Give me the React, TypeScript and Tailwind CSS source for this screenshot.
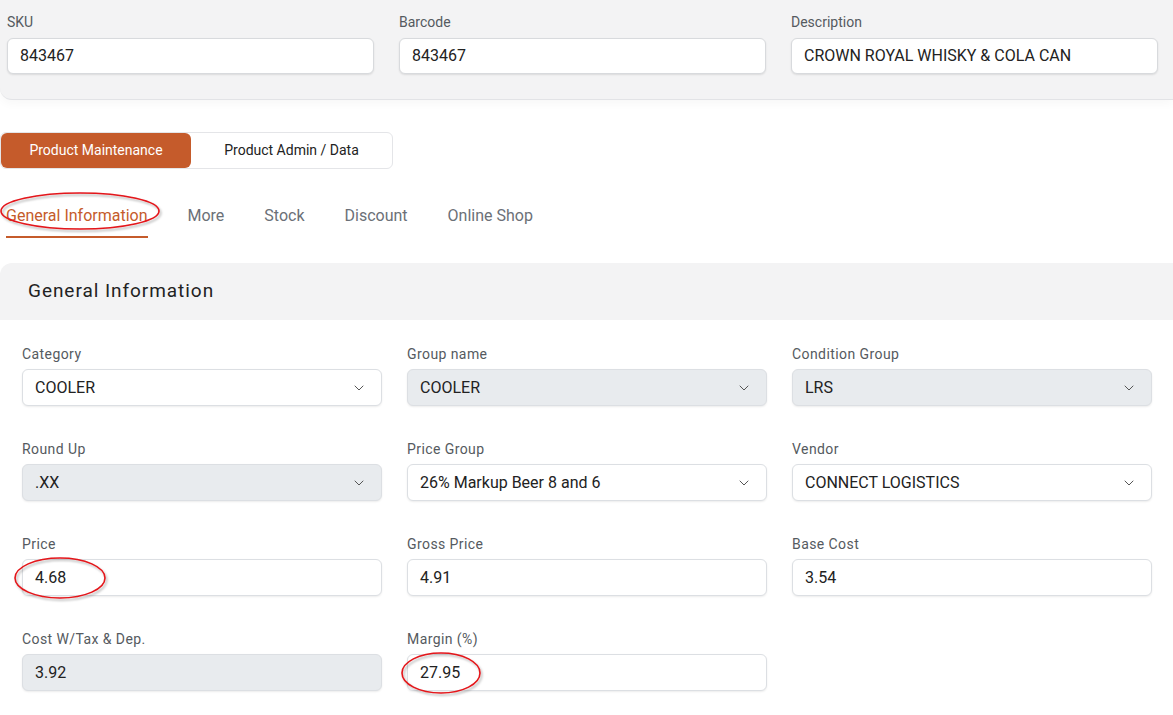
import { ChevronDown } from "lucide-react";

// --- small building blocks ---------------------------------------------------

function Field({ label, value, select, disabled }: { label: string; value: string; select?: boolean; disabled?: boolean }) {
  return (
    <div className="flex flex-col">
      <label className="text-[14px] leading-5 tracking-[0.03em] text-[#555a60] mb-[5px]">{label}</label>
      <div
        className={`h-[37px] flex items-center justify-between rounded-md border border-[#dcdfe3] shadow-[0_1px_2px_rgba(0,0,0,0.08)] pl-[12px] pr-[14px] ${
          disabled ? "bg-[#e8ebee]" : "bg-white"
        }`}
      >
        <span className="text-[16px] text-[#222]">{value}</span>
        {select && <ChevronDown size={16} strokeWidth={1.5} className="text-[#555]" />}
      </div>
    </div>
  );
}

function TopField({ label, value }: { label: string; value: string }) {
  return (
    <div className="flex flex-col">
      <label className="text-[14px] leading-5 text-[#555a60] mb-[6px]">{label}</label>
      <div className="h-[36px] flex items-center rounded-md border border-[#d8dadd] bg-white shadow-[0_1px_2px_rgba(0,0,0,0.1)] px-[12px]">
        <span className="text-[16px] text-[#222]">{value}</span>
      </div>
    </div>
  );
}

const tabs = ["General Information", "More", "Stock", "Discount", "Online Shop"];

export default function App() {
  return (
    <div className="relative min-h-screen bg-white font-['Roboto',sans-serif] overflow-hidden">
      {/* Header card */}
      <div className="bg-[#f3f3f4] border-b border-[#e2e3e6] rounded-bl-xl pt-[12px] pb-[25px] pl-[7px] pr-[15px] shadow-[0_4px_10px_rgba(0,0,0,0.03)]">
        <div className="grid grid-cols-3 gap-[25px]">
          <TopField label="SKU" value="843467" />
          <TopField label="Barcode" value="843467" />
          <TopField label="Description" value="CROWN ROYAL WHISKY & COLA CAN" />
        </div>
      </div>

      {/* Segmented control */}
      <div className="mt-[32px] flex w-[393px] h-[37px] rounded-md border border-[#e4e5e8] bg-white">
        <button className="w-[190px] rounded-md bg-[#c55b2b] text-white text-[14px]">Product Maintenance</button>
        <button className="flex-1 text-[14px] text-[#222]">Product Admin / Data</button>
      </div>

      {/* Tabs */}
      <div className="mt-[37px] flex gap-10 pl-[6px]">
        {tabs.map((t, i) => (
          <div
            key={t}
            className={`pb-[10px] text-[16px] leading-5 border-b-2 ${
              i === 0 ? "text-[#c55b2b] border-[#c55b2b]" : "text-[#6b7077] border-transparent"
            }`}
          >
            {t}
          </div>
        ))}
      </div>

      {/* Section */}
      <div className="mt-[25px]">
        <div className="h-[57px] bg-[#f3f3f4] rounded-tl-xl flex items-center pl-[28px]">
          <h2 className="text-[19px] tracking-[0.05em] text-[#222]">General Information</h2>
        </div>
        <div className="pl-[22px] pr-[21px] pt-[24px] grid grid-cols-3 gap-x-[25px] gap-y-[33px]">
          <Field label="Category" value="COOLER" select />
          <Field label="Group name" value="COOLER" select disabled />
          <Field label="Condition Group" value="LRS" select disabled />
          <Field label="Round Up" value=".XX" select disabled />
          <Field label="Price Group" value="26% Markup Beer 8 and 6" select />
          <Field label="Vendor" value="CONNECT LOGISTICS" select />
          <Field label="Price" value="4.68" />
          <Field label="Gross Price" value="4.91" />
          <Field label="Base Cost" value="3.54" />
          <Field label="Cost W/Tax & Dep." value="3.92" disabled />
          <Field label="Margin (%)" value="27.95" />
        </div>
      </div>

      {/* Red annotation marks drawn over the screenshot */}
      <svg className="absolute inset-0 pointer-events-none" width="1173" height="715">
        <defs>
          <filter id="sh" x="-20%" y="-40%" width="140%" height="180%">
            <feDropShadow dx="1.5" dy="2" stdDeviation="1.2" floodColor="#000" floodOpacity="0.3" />
          </filter>
        </defs>
        <g fill="none" stroke="#e3151a" strokeWidth="1.6" filter="url(#sh)">
          <ellipse cx="80" cy="211" rx="79" ry="18" />
          <ellipse cx="60" cy="578" rx="45" ry="20" />
          <ellipse cx="441" cy="673" rx="39" ry="20" />
        </g>
      </svg>
    </div>
  );
}
